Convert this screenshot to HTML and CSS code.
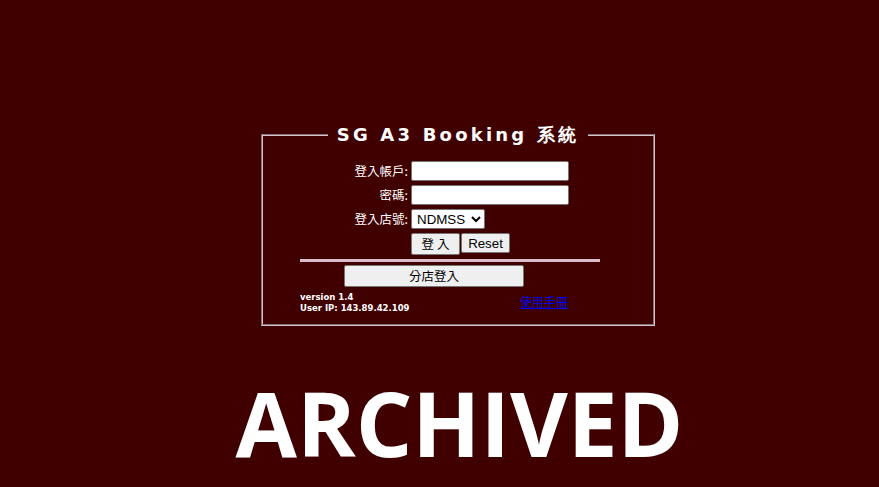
FILE: index.html
```html
<!DOCTYPE html>
<html>
<head>
<meta charset="utf-8">
<title>SG A3 Booking 系統</title>
<link rel="stylesheet" href="styles.css">
</head>
<body>
<div class="page">
  <fieldset class="box">
    <legend class="title">SG A3 Booking 系統</legend>
    <div class="inner">
      <div class="row">
        <span class="label">登入帳戶:</span>
        <input class="field" type="text">
      </div>
      <div class="row">
        <span class="label">密碼:</span>
        <input class="field" type="password">
      </div>
      <div class="row">
        <span class="label">登入店號:</span>
        <select class="shop"><option>NDMSS</option></select>
      </div>
      <div class="row">
        <span class="label"></span>
        <button class="btn btn-login" type="button">登 入</button><button class="btn btn-reset" type="button">Reset</button>
      </div>
      <div class="rule"></div>
      <div class="branch-row">
        <button class="btn btn-branch" type="button">分店登入</button>
      </div>
      <div class="foot">
        <div class="info">
          <div>version 1.4</div>
          <div>User IP: 143.89.42.109</div>
        </div>
        <a class="manual" href="#">使用手冊</a>
      </div>
    </div>
  </fieldset>
  <div class="archived">ARCHIVED</div>
</div>
</body>
</html>
```
FILE: styles.css
```css
html, body {
  margin: 0;
  padding: 0;
  background: #400000;
  height: 100%;
}
body {
  font-family: "Noto Sans CJK TC", "Liberation Sans", sans-serif;
  color: #ffffff;
}
.page {
  display: flex;
  flex-direction: column;
  align-items: center;
  padding-left: 37px;
  padding-top: 123px;
}
.box {
  width: 394px;
  box-sizing: border-box;
  margin: 0;
  padding: 0;
  border: 2px groove #d8c0c8;
}
.title {
  margin: 0 auto;
  padding: 0 9px;
  font-family: "DejaVu Sans", Verdana, sans-serif;
  font-weight: bold;
  font-size: 18px;
  letter-spacing: 3.2px;
  line-height: 24px;
  color: #ffffff;
}
.inner {
  width: 300px;
  margin-left: 37px;
  padding-top: 12px;
  padding-bottom: 10px;
}
.row {
  display: flex;
  align-items: center;
  height: 24px;
}
.label {
  width: 108px;
  padding-right: 3px;
  text-align: right;
  font-size: 12.5px;
  line-height: 16px;
  color: #ffffff;
}
.field {
  box-sizing: border-box;
  width: 158px;
  height: 20px;
  margin: 0;
  border: 1px solid #767676;
  border-radius: 2px;
  background: #ffffff;
}
.shop {
  box-sizing: border-box;
  width: 74px;
  height: 20px;
  margin: 0;
  padding: 0 0 0 1px;
  font-family: "Liberation Sans", Arial, sans-serif;
  font-size: 13.33px;
  color: #000;
  background: #fff;
  border: 1px solid #767676;
  border-radius: 2px;
}
.btn {
  box-sizing: border-box;
  margin: 0;
  padding: 0;
  background: #efefef;
  border: 1px solid #767676;
  border-radius: 2px;
  color: #000;
  font-family: "Liberation Sans", Arial, sans-serif;
  font-size: 13.3px;
}
.btn-login {
  width: 49px;
  height: 22px;
  margin-top: 2px;
  font-family: "Noto Sans CJK TC", sans-serif;
  font-size: 12.5px;
  line-height: 18px;
}
.btn-reset {
  width: 49px;
  height: 20px;
  margin-left: 1px;
}
.rule {
  height: 3px;
  background: #dcbcc8;
  margin-top: 4px;
}
.branch-row {
  padding-top: 3px;
  padding-left: 44px;
  display: flex;
}
.btn-branch {
  width: 180px;
  height: 22px;
  font-family: "Noto Sans CJK TC", sans-serif;
  font-size: 12.5px;
  line-height: 18px;
}
.foot {
  display: flex;
  align-items: center;
  padding-top: 5px;
}
.info {
  width: 220px;
  font-family: "DejaVu Sans", Verdana, sans-serif;
  font-weight: bold;
  font-size: 8.5px;
  line-height: 11px;
  color: #ffffff;
}
.manual {
  font-size: 12px;
  line-height: 14px;
  color: #0000ee;
  text-decoration: underline;
  margin-top: -2px;
}
.archived {
  margin-top: 42px;
  padding-left: 3px;
  font-family: "Open Sans", sans-serif;
  font-weight: bold;
  font-size: 89px;
  line-height: 110px;
  color: #ffffff;
}
```
